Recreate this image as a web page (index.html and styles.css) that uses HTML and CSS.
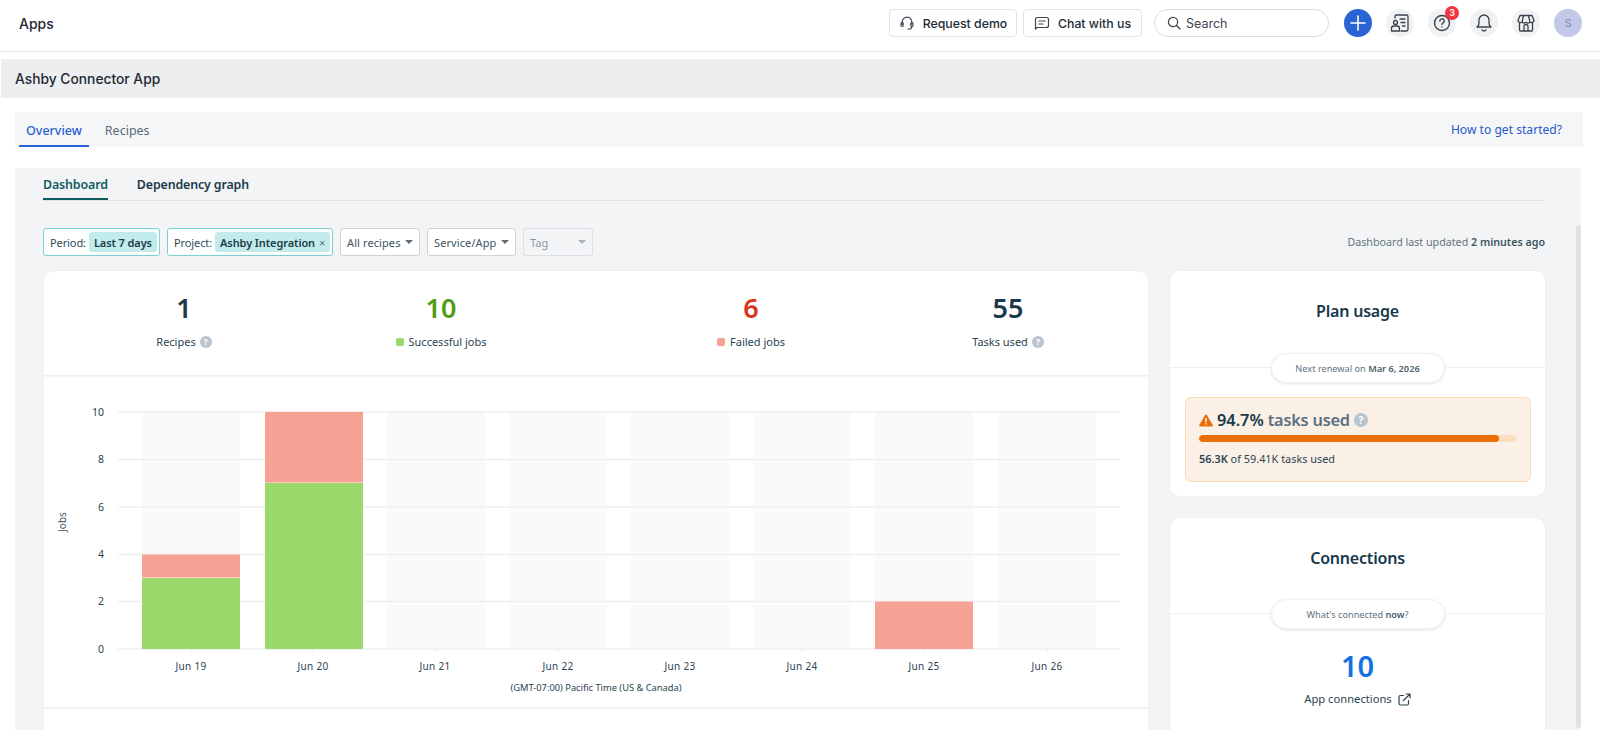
FILE: index.html
```html
<!DOCTYPE html>
<html lang="en">
<head>
<meta charset="utf-8">
<title>Ashby Connector App</title>
<link rel="stylesheet" href="styles.css">
</head>
<body>
<header class="topbar">
  <div class="brand">Apps</div>
  <div class="top-actions">
    <button class="top-btn req">
      <svg width="16" height="16" viewBox="0 0 16 16" fill="none" stroke="#3c4650" stroke-width="1.2" stroke-linecap="round"><path d="M3.2 9.5V7a4.8 4.8 0 0 1 9.6 0v2.5"/><rect x="2" y="7.5" width="2.2" height="4" rx="1.1"/><rect x="11.8" y="7.5" width="2.2" height="4" rx="1.1"/><path d="M12.8 11.5c0 1.8-1.6 2.6-3.6 2.6"/></svg>
      <span>Request demo</span>
    </button>
    <button class="top-btn chat">
      <svg width="16" height="16" viewBox="0 0 16 16" fill="none" stroke="#3c4650" stroke-width="1.2" stroke-linecap="round" stroke-linejoin="round"><path d="M3.5 2.5h9a2 2 0 0 1 2 2v6a2 2 0 0 1-2 2H3.2L1.5 14V4.5a2 2 0 0 1 2-2z"/><path d="M4.8 6h6.4M4.8 9h4.2"/></svg>
      <span>Chat with us</span>
    </button>
    <div class="search">
      <svg width="14" height="14" viewBox="0 0 14 14" fill="none" stroke="#3c4650" stroke-width="1.2" stroke-linecap="round"><circle cx="6" cy="6" r="4.6"/><path d="M9.5 9.5 13 13"/></svg>
      <span>Search</span>
    </div>
    <div class="icons">
      <div class="round plus">
        <svg width="16" height="16" viewBox="0 0 16 16" fill="none" stroke="#fff" stroke-width="1.6" stroke-linecap="round"><path d="M8 1v14M1 8h14"/></svg>
      </div>
      <div class="round">
        <svg width="20" height="20" viewBox="0 0 20 20" fill="none" stroke="#38424c" stroke-width="1.3" stroke-linecap="round" stroke-linejoin="round"><path d="M5 5V3.5A1.5 1.5 0 0 1 6.500 2h10A1.500 1.500 0 0 1 18 3.500v13a1.500 1.500 0 0 1-1.500 1.500H11"/><circle cx="5.500" cy="9.500" r="2"/><path d="M1.500 18v-2.500a2.500 2.500 0 0 1 2.500-2.500h3a2.500 2.500 0 0 1 2.500 2.500V18z"/><path d="M10 6h5M11 9.500h4M12.500 13h2.500"/></svg>
      </div>
      <div class="round help-round">
        <svg width="18" height="18" viewBox="0 0 18 18" fill="none" stroke="#38424c" stroke-width="1.4" stroke-linecap="round"><path d="M9 1.500a7.500 7.500 0 1 0 0 15 7.500 7.500 0 0 0 0-15z"/><path d="M6.800 7a2.200 2.200 0 1 1 3.300 1.900c-.7.400-1.100.9-1.100 1.700"/><path d="M9 13v.1"/></svg>
        <span class="badge">3</span>
      </div>
      <div class="round">
        <svg width="18" height="20" viewBox="0 0 18 20" fill="none" stroke="#38424c" stroke-width="1.3" stroke-linecap="round" stroke-linejoin="round"><path d="M9 2a5 5 0 0 0-5 5v3.500c0 1.500-1 2.700-2 3.500h14c-1-.8-2-2-2-3.500V7a5 5 0 0 0-5-5z"/><path d="M7 16.800c.4.800 1.100 1.200 2 1.200s1.600-.4 2-1.200"/></svg>
      </div>
      <div class="round">
        <svg width="20" height="20" viewBox="0 0 20 20" fill="none" stroke="#38424c" stroke-width="1.300" stroke-linejoin="round"><path d="M4 2.500h12l2 5a2.700 2.700 0 0 1-4 1.800 3.300 3.300 0 0 1-4 0 3.300 3.300 0 0 1-4 0 2.700 2.700 0 0 1-4-1.800z"/><path d="M7.500 2.500 6 9.300M12.500 2.500 14 9.300"/><path d="M3.500 10v7a1 1 0 0 0 1 1h11a1 1 0 0 0 1-1v-7"/><path d="M8 18v-4.500a2 2 0 0 1 4 0V18"/></svg>
      </div>
      <div class="round avatar">S</div>
    </div>
  </div>
</header>

<div class="titlebar">Ashby Connector App</div>

<nav class="tabs">
  <a class="tab active">Overview</a>
  <a class="tab">Recipes</a>
  <a class="started">How to get started?</a>
</nav>

<main class="panel">
  <div class="subtabs">
    <a class="subtab active">Dashboard</a>
    <a class="subtab">Dependency graph</a>
  </div>

  <div class="filters">
    <div class="filter sel period"><span class="flabel">Period:</span><span class="chip">Last 7 days</span></div>
    <div class="filter sel project"><span class="flabel">Project:</span><span class="chip">Ashby Integration <i class="x">×</i></span></div>
    <div class="filter drop recipes">All recipes<i class="caret"></i></div>
    <div class="filter drop service">Service/App<i class="caret"></i></div>
    <div class="filter drop off tag">Tag<i class="caret"></i></div>
    <div class="updated">Dashboard last updated <b>2 minutes ago</b></div>
  </div>

  <div class="columns">
    <section class="card main-card">
      <div class="stats">
        <div class="stat"><div class="num">1</div><div class="lab">Recipes <i class="help">?</i></div></div>
        <div class="stat"><div class="num green">10</div><div class="lab"><i class="dot g"></i>Successful jobs</div></div>
        <div class="stat"><div class="num red">6</div><div class="lab"><i class="dot r"></i>Failed jobs</div></div>
        <div class="stat"><div class="num">55</div><div class="lab">Tasks used <i class="help">?</i></div></div>
      </div>
      <div class="chart">
        <svg class="plot" width="1104" height="331" viewBox="44 376 1104 331">
          <g class="bands">
            <rect x="142" y="412" width="98" height="237"/><rect x="265" y="412" width="98" height="237"/>
            <rect x="387" y="412" width="98" height="237"/><rect x="509" y="412" width="98" height="237"/>
            <rect x="631" y="412" width="98" height="237"/><rect x="753" y="412" width="98" height="237"/>
            <rect x="875" y="412" width="98" height="237"/><rect x="998" y="412" width="98" height="237"/>
          </g>
          <g class="grid">
            <path d="M118 412H1120M118 459.500H1120M118 507H1120M118 554.500H1120M118 601.500H1120M118 649H1120"/>
            <path d="M191 649v3M313 649v3M435 649v3M558 649v3M680 649v3M802 649v3M924 649v3M1047 649v3"/>
          </g>
          <g class="ok">
            <rect x="142" y="578" width="98" height="71"/><rect x="265" y="483" width="98" height="166"/>
          </g>
          <g class="bad">
            <rect x="142" y="554.500" width="98" height="23"/><rect x="265" y="412" width="98" height="70.500"/>
            <rect x="875" y="601.500" width="98" height="47.500"/>
          </g>
          <g class="ylab">
            <text x="104" y="416">10</text><text x="104" y="463">8</text><text x="104" y="511">6</text>
            <text x="104" y="558">4</text><text x="104" y="605">2</text><text x="104" y="653">0</text>
          </g>
          <text class="jobs" transform="translate(66 522) rotate(-90)">Jobs</text>
          <g class="xlab">
            <text x="191" y="670">Jun 19</text><text x="313" y="670">Jun 20</text><text x="435" y="670">Jun 21</text>
            <text x="558" y="670">Jun 22</text><text x="680" y="670">Jun 23</text><text x="802" y="670">Jun 24</text>
            <text x="924" y="670">Jun 25</text><text x="1047" y="670">Jun 26</text>
          </g>
          <text class="tz" x="596" y="691">(GMT-07:00) Pacific Time (US &amp; Canada)</text>
        </svg>
      </div>
      <div class="card-foot"></div>
    </section>

    <aside class="side">
      <section class="card plan">
        <h2>Plan usage</h2>
        <div class="rule"><span class="pill"><span>Next renewal on <b>Mar 6, 2026</b></span></span></div>
        <div class="warn">
          <div class="warn-head">
            <svg width="14" height="13" viewBox="0 0 14 13"><path fill="#e96f0a" d="M7 .5c.4 0 .7.200.9.500l5.800 10c.4.700-.1 1.500-.9 1.500H1.200c-.8 0-1.300-.8-.9-1.500L6.100 1c.2-.3.500-.5.900-.5z"/><path fill="#fff" d="M6.300 4h1.400v4.200H6.300zM6.300 9.200h1.400v1.400H6.300z"/></svg>
            <b>94.7%</b><span class="tu">tasks used</span><i class="help big">?</i>
          </div>
          <div class="bar"><div class="fill" style="width:94.7%"></div></div>
          <div class="warn-foot"><b>56.3K</b> of 59.41K tasks used</div>
        </div>
      </section>
      <section class="card conn">
        <h2>Connections</h2>
        <div class="rule"><span class="pill"><span>What's connected <b>now</b>?</span></span></div>
        <div class="conn-num">10</div>
        <div class="conn-lab">App connections
          <svg width="13" height="13" viewBox="0 0 13 13" fill="none" stroke="#2b4452" stroke-width="1.200" stroke-linecap="round" stroke-linejoin="round"><path d="M10.500 7.500v3a1.500 1.500 0 0 1-1.500 1.500H2.500A1.500 1.500 0 0 1 1 10.500V4a1.500 1.500 0 0 1 1.500-1.500h3"/><path d="M5.500 7.500 12 1M8 1h4v4"/></svg>
        </div>
      </section>
    </aside>
  </div>
  <div class="scrollthumb"></div>
</main>
</body>
</html>
```
FILE: styles.css
```css
* { box-sizing: border-box; }
html, body { margin: 0; height: 730px; overflow: hidden; background: #fff; }
body { font-family: "Noto Sans", sans-serif; color: #1d3b4a; }
i { font-style: normal; }
svg { flex: none; }

.topbar { height: 52px; display: flex; align-items: center; padding: 0 18px 5px 19px; border-bottom: 1px solid #e8eaed; font-family: Inter, sans-serif; }
.brand { font-size: 14px; font-weight: 500; color: #1f2933; }
.top-actions { margin-left: auto; display: flex; align-items: center; }
.top-btn { height: 28px; display: flex; align-items: center; justify-content: center; gap: 8px; padding: 0; background: #fff; border: 1px solid #dfe2e6; border-radius: 4px; font: 500 12.300px Inter, sans-serif; color: #222b33; white-space: nowrap; }
.req { width: 128px; margin-right: 6px; }
.chat { width: 119px; margin-right: 12px; }
.search { width: 175px; height: 28px; display: flex; align-items: center; gap: 5px; padding: 0 12px; border: 1px solid #d9dde3; border-radius: 14px; font-size: 12.500px; color: #3c4650; }
.icons { display: flex; gap: 14px; margin-left: 15px; }
.round { position: relative; width: 28px; height: 28px; border-radius: 50%; background: #f0f1f3; display: flex; align-items: center; justify-content: center; }
.plus { background: #2a63d4; }
.avatar { background: #c3c8e8; color: #8b91b5; font-size: 11px; font-weight: 500; }
.badge { position: absolute; top: -3px; left: 17px; width: 14px; height: 14px; border-radius: 50%; background: #f0353f; color: #fff; font-size: 9px; font-weight: 600; line-height: 14px; text-align: center; }

.titlebar { height: 39px; margin: 7px 0 0 1px; padding-left: 14px; background: #edeef0; display: flex; align-items: center; font: 500 13.800px Inter, sans-serif; color: #1f2933; }

.tabs { height: 35px; margin: 14px 17px 0 15px; background: #f5f6f8; display: flex; align-items: flex-end; font-size: 12.500px; padding-left: 4px; }
.tab { height: 35px; display: flex; align-items: center; padding: 4px 7px 0; color: #5c6b78; border-bottom: 2px solid transparent; }
.tab.active { color: #2a5fd0; font-weight: 500; border-bottom-color: #2a63d4; margin-right: 9px; }
.started { margin: 0 21px 0 auto; align-self: center; color: #1f5bc9; font-size: 12.100px; }

.panel { position: relative; height: 562px; margin: 21px 0 0 15px; width: 1566px; padding: 0 36px 0 28px; background: #f3f4f6; overflow: hidden; }
.subtabs { height: 33px; display: flex; gap: 29px; border-bottom: 1px solid #e0e3e6; }
.subtab { height: 32px; padding-top: 8px; font-size: 12.400px; letter-spacing: -.12px; font-weight: 600; color: #1c3a4a; }
.subtab.active { color: #0f5c60; border-bottom: 2px solid #0f5c60; }

.filters { display: flex; align-items: center; gap: 7px; height: 28px; margin-top: 27px; font-size: 11px; letter-spacing: -.1px; }
.filter { height: 28px; display: flex; align-items: center; background: #fff; border-radius: 3px; }
.sel { border: 1px solid #77d2d4; padding: 0 3px 0 6px; gap: 3px; color: #2f4a58; }
.period { width: 117px; }
.project { width: 166px; }
.chip { height: 20px; padding: 0 5px; background: #c2ecec; border-radius: 3px; display: flex; align-items: center; gap: 4px; font-weight: 600; color: #1d3b4a; white-space: nowrap; }
.x { font-weight: 400; color: #56707c; }
.drop { border: 1px solid #ccd1d6; padding: 0 6px; justify-content: space-between; color: #3d5462; letter-spacing: .1px; }
.recipes { width: 80px; }
.service { width: 89px; }
.tag { width: 70px; background: #f3f4f6; color: #8a98a3; border-color: #dcdfe3; }
.caret { width: 0; height: 0; border: 4px solid transparent; border-top: 4px solid #5e6d78; border-bottom: 0; }
.tag .caret { border-top-color: #a9b3bb; }
.updated { margin-left: auto; color: #63747f; font-size: 10.700px; letter-spacing: 0; }
.updated b { font-weight: 600; color: #3d5462; }

.columns { display: grid; grid-template-columns: 1104px 375px; gap: 22px; margin: 15px 0 0 1px; }
.card { background: #fff; border-radius: 10px; box-shadow: 0 0 0 1px #eef0f2; }
.main-card { height: 459px; overflow: hidden; border-radius: 10px 10px 0 0; }
.stats { display: grid; grid-template-columns: 280px 234px 386px 128px; height: 105px; border-bottom: 1px solid #eceef0; box-shadow: 0 1px 2px #f0f1f3; }
.stat { text-align: center; padding-top: 18px; }
.num { font-size: 27px; font-weight: 600; line-height: 38px; color: #1a3a4a; }
.num.green { color: #4f9d12; }
.num.red { color: #d9341a; }
.lab { margin-top: 5px; font-size: 11px; line-height: 20px; color: #2b4452; display: flex; align-items: center; justify-content: center; gap: 4px; white-space: nowrap; }
.help { display: inline-flex; flex: none; width: 12px; height: 12px; border-radius: 50%; background: #b9c4ce; color: #fff; font-size: 9px; font-weight: 700; align-items: center; justify-content: center; font-style: normal; }
.dot { width: 8px; height: 8px; border-radius: 2px; margin-right: 1px; }
.dot.g { background: #9cd96c; }
.dot.r { background: #f5a193; }

.chart { height: 332px; border-bottom: 1px solid #eceef0; box-shadow: 0 1px 2px #f0f1f3; }
.plot { display: block; }
.bands rect { fill: #f9fafa; }
.grid path { stroke: #eeeff3; fill: none; stroke-width: 1.500; }
.ok rect { fill: #9cd96c; }
.bad rect { fill: #f5a193; }
.ylab text { font-size: 10.500px; fill: #2b4452; text-anchor: end; }
.xlab text { font-size: 10px; letter-spacing: .3px; fill: #2b4452; text-anchor: middle; }
.tz { font-size: 9.300px; fill: #2b4452; text-anchor: middle; }
.jobs { font-size: 10px; fill: #3d5462; text-anchor: middle; }
.card-foot { height: 22px; }

.side { display: flex; flex-direction: column; gap: 22px; }
.plan { height: 225px; }
.conn { height: 212px; border-radius: 10px 10px 0 0; }
.side h2 { margin: 0; padding-top: 27px; height: 82px; text-align: center; font-size: 16px; letter-spacing: -.2px; font-weight: 600; line-height: 26px; color: #17394a; }
.conn h2 { height: 81px; }
.rule { height: 30px; display: flex; justify-content: center; align-items: center; background: linear-gradient(#eceef0, #eceef0) 0 14px / 100% 1px no-repeat; }
.pill { width: 174px; height: 30px; background: #fff; border-radius: 15px; box-shadow: 0 1px 3px #dfe3e6; border: 1px solid #eff1f2; display: flex; align-items: center; justify-content: center; font-size: 9.200px; color: #63747f; white-space: nowrap; }
.pill b { font-weight: 600; color: #4a5f6c; }
.warn { margin: 14px 14px 0 15px; height: 85px; padding: 10px 14px 0 13px; background: #fbf0e5; border: 1px solid #fdd9b0; border-radius: 6px; }
.warn-head { display: flex; align-items: center; gap: 4px; height: 24px; font-size: 16.300px; line-height: 24px; font-weight: 600; color: #17394a; white-space: nowrap; }
.warn-head b { font-weight: 600; }
.tu { color: #5a7080; letter-spacing: -.2px; }
.help.big { width: 14px; height: 14px; font-size: 10px; }
.bar { height: 7px; margin-top: 3px; background: #fddfc0; border-radius: 4px; overflow: hidden; }
.fill { height: 7px; background: #e96f0a; border-radius: 4px; }
.warn-foot { margin-top: 9px; font-size: 10.900px; line-height: 16px; color: #2b4452; }
.warn-foot b { font-weight: 600; }
.conn-num { margin-top: 17px; text-align: center; font-size: 29px; line-height: 40px; font-weight: 600; color: #1570e0; }
.conn-lab { margin-top: 3px; display: flex; align-items: center; justify-content: center; gap: 6px; font-size: 11.200px; line-height: 20px; color: #2b4452; }

.scrollthumb { position: absolute; left: 1561px; top: 57px; width: 5px; height: 503px; background: #dfe2e5; border-radius: 3px; }
```
